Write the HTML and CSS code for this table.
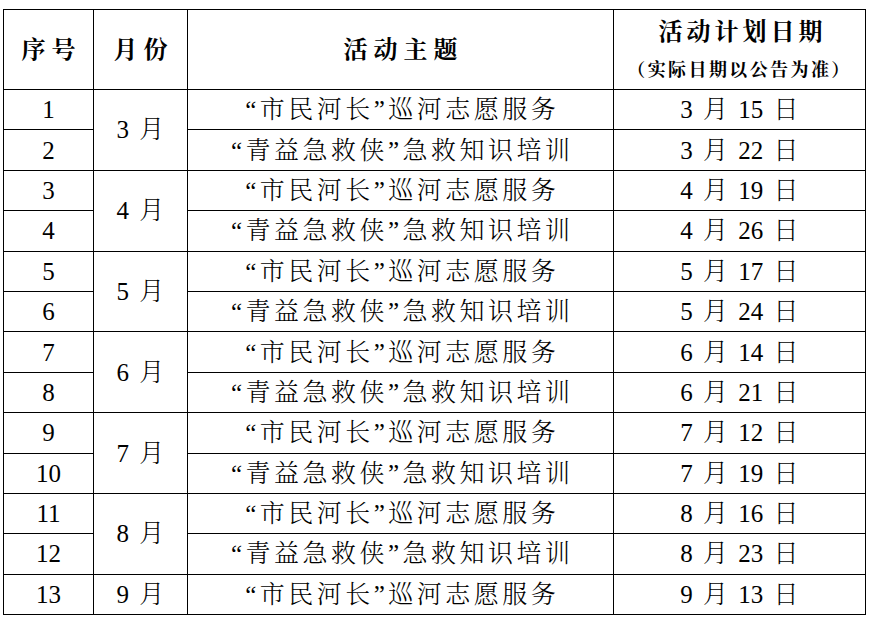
FILE: index.html
```html
<!DOCTYPE html>
<html lang="zh-CN">
<head>
<meta charset="utf-8">
<title>活动计划</title>
<link rel="stylesheet" href="styles.css">
</head>
<body>
<table class="plan">
  <colgroup>
    <col class="c-no">
    <col class="c-month">
    <col class="c-topic">
    <col class="c-date">
  </colgroup>
  <thead>
    <tr>
      <th>序号</th>
      <th>月份</th>
      <th>活动主题</th>
      <th><div class="h-main">活动计划日期</div><div class="h-sub">（实际日期以公告为准）</div></th>
    </tr>
  </thead>
  <tbody>
    <tr><td>1</td><td rowspan="2" class="dt">3 月</td><td class="cn">“市民河长”巡河志愿服务</td><td class="dt">3 月 15 日</td></tr>
    <tr><td>2</td><td class="cn">“青益急救侠”急救知识培训</td><td class="dt">3 月 22 日</td></tr>
    <tr><td>3</td><td rowspan="2" class="dt">4 月</td><td class="cn">“市民河长”巡河志愿服务</td><td class="dt">4 月 19 日</td></tr>
    <tr><td>4</td><td class="cn">“青益急救侠”急救知识培训</td><td class="dt">4 月 26 日</td></tr>
    <tr><td>5</td><td rowspan="2" class="dt">5 月</td><td class="cn">“市民河长”巡河志愿服务</td><td class="dt">5 月 17 日</td></tr>
    <tr><td>6</td><td class="cn">“青益急救侠”急救知识培训</td><td class="dt">5 月 24 日</td></tr>
    <tr><td>7</td><td rowspan="2" class="dt">6 月</td><td class="cn">“市民河长”巡河志愿服务</td><td class="dt">6 月 14 日</td></tr>
    <tr><td>8</td><td class="cn">“青益急救侠”急救知识培训</td><td class="dt">6 月 21 日</td></tr>
    <tr><td>9</td><td rowspan="2" class="dt">7 月</td><td class="cn">“市民河长”巡河志愿服务</td><td class="dt">7 月 12 日</td></tr>
    <tr><td>10</td><td class="cn">“青益急救侠”急救知识培训</td><td class="dt">7 月 19 日</td></tr>
    <tr><td>11</td><td rowspan="2" class="dt">8 月</td><td class="cn">“市民河长”巡河志愿服务</td><td class="dt">8 月 16 日</td></tr>
    <tr><td>12</td><td class="cn">“青益急救侠”急救知识培训</td><td class="dt">8 月 23 日</td></tr>
    <tr><td>13</td><td class="dt">9 月</td><td class="cn">“市民河长”巡河志愿服务</td><td class="dt">9 月 13 日</td></tr>
  </tbody>
</table>
</body>
</html>
```
FILE: styles.css
```css
html, body {
  margin: 0;
  padding: 0;
  background: #fff;
}

body {
  padding: 9px 0 0 3px;
  font-family: "Liberation Serif", "Noto Serif CJK SC", "Noto Sans CJK SC", serif;
  color: #000;
}

.plan {
  border-collapse: collapse;
  table-layout: fixed;
  width: 862px;
}

.c-no { width: 90px; }
.c-month { width: 94px; }
.c-topic { width: 426px; }
.c-date { width: 252px; }

.plan th,
.plan td {
  border: 1px solid #000;
  padding: 0;
  text-align: center;
  vertical-align: middle;
}

.plan th {
  height: 79px;
  font-size: 24px;
  font-weight: 700;
  letter-spacing: 6px;
  text-indent: 6px;
  line-height: 1;
}

.h-main {
  font-size: 24px;
  letter-spacing: 4px;
  margin-bottom: 17px;
}

.h-sub {
  font-size: 18px;
  letter-spacing: 2.4px;
  text-indent: 0;
}

.plan td {
  height: 39.4px;
  font-size: 25px;
  line-height: 1;
  font-weight: 400;
}

.plan td.cn {
  font-weight: 300;
  letter-spacing: 3.5px;
  text-indent: 3.5px;
}

.plan td.dt {
  font-weight: 300;
  word-spacing: 4px;
}
```
